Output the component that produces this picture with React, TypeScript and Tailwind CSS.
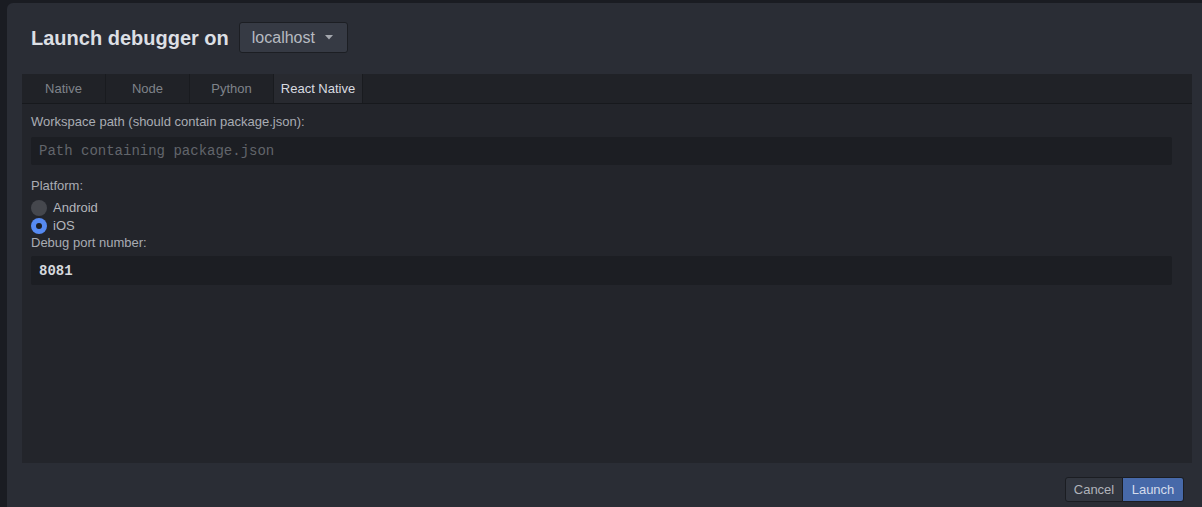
import React, { useState } from "react";

const tabs = ["Native", "Node", "Python", "React Native"];

export default function App() {
  const [active, setActive] = useState("React Native");
  const [platform, setPlatform] = useState("ios");

  return (
    <div className="h-[507px] w-[1202px] overflow-hidden bg-[#1a1c22] pt-[3px] pl-[7px] font-['Liberation_Sans',Arial,sans-serif]">
      <div className="flex h-[520px] w-[1200px] flex-col rounded-tl-md bg-[#2a2d35]">
        {/* Header */}
        <div className="flex items-center gap-[10px] pl-[24px] pt-[19px]">
          <h1 className="text-[20px] font-bold text-[#dcdfe4]">Launch debugger on</h1>
          <button className="flex h-[31px] w-[109px] items-center gap-[10px] rounded-[3px] border border-[#1c1e23] bg-[#363a44] pl-[12px] text-[16px] text-[#b7bac1]">
            localhost
            <svg width="8" height="5" viewBox="0 0 8 5">
              <path d="M0 0h8L4 4.5z" fill="#a4a7ae" />
            </svg>
          </button>
        </div>

        {/* Panel */}
        <div className="ml-[15px] mt-[21px] flex h-[389px] w-[1170px] flex-col bg-[#23252b]">
          <div className="flex h-[30px] border-b border-[#17191d] bg-[#202227]">
            {tabs.map((t) => (
              <button
                key={t}
                onClick={() => setActive(t)}
                className={
                  t === active
                    ? "h-[29px] w-[89px] border-r border-[#191b1f] bg-[#282a30] text-[13px] text-[#d8dbe0]"
                    : "h-[29px] w-[84px] border-r border-[#191b1f] text-[13px] text-[#7f838a]"
                }
              >
                {t}
              </button>
            ))}
          </div>

          <div className="flex flex-col pl-[9px] pr-[20px] pt-[10px] text-[13px] text-[#a9acb3]">
            <label className="leading-[16px]">Workspace path (should contain package.json):</label>
            <input
              className="mt-[7px] h-[28px] rounded-[2px] bg-[#1c1e23] px-[8px] font-['Liberation_Mono',monospace] text-[14px] text-[#c8cbd0] outline-none placeholder:text-[#62656b]"
              placeholder="Path containing package.json"
            />
            <label className="mt-[13px] leading-[16px]">Platform:</label>
            <div className="mt-[6px] flex flex-col gap-[2px]">
              {[
                ["android", "Android"],
                ["ios", "iOS"],
              ].map(([k, l]) => (
                <div key={k} className="flex h-[16px] cursor-pointer items-center gap-[6px]" onClick={() => setPlatform(k)}>
                  <span
                    className={
                      platform === k
                        ? "flex h-[16px] w-[16px] items-center justify-center rounded-full bg-[#568af2]"
                        : "flex h-[16px] w-[16px] items-center justify-center rounded-full bg-[#45474d]"
                    }
                  >
                    {platform === k && <span className="h-[6px] w-[6px] rounded-full bg-[#1b1d22]" />}
                  </span>
                  <span className="text-[13px] text-[#b3b6bc]">{l}</span>
                </div>
              ))}
            </div>
            <label className="mt-[1px] leading-[16px]">Debug port number:</label>
            <input
              className="mt-[5px] h-[29px] rounded-[2px] bg-[#1c1e23] px-[8px] font-['Liberation_Mono',monospace] text-[14px] font-bold text-[#d6d9de] outline-none"
              defaultValue="8081"
            />
          </div>
        </div>

        {/* Footer */}
        <div className="mt-[14px] flex w-[1177px] justify-end">
          <button className="h-[25px] w-[58px] rounded-l-[3px] border border-[#1b1d22] bg-[#32363f] text-[13px] text-[#b0b3ba]">
            Cancel
          </button>
          <button className="h-[25px] w-[61px] rounded-r-[3px] border border-[#1b1d22] border-l-0 bg-[#4769a9] text-[13px] text-[#d5dcec]">
            Launch
          </button>
        </div>
      </div>
    </div>
  );
}
